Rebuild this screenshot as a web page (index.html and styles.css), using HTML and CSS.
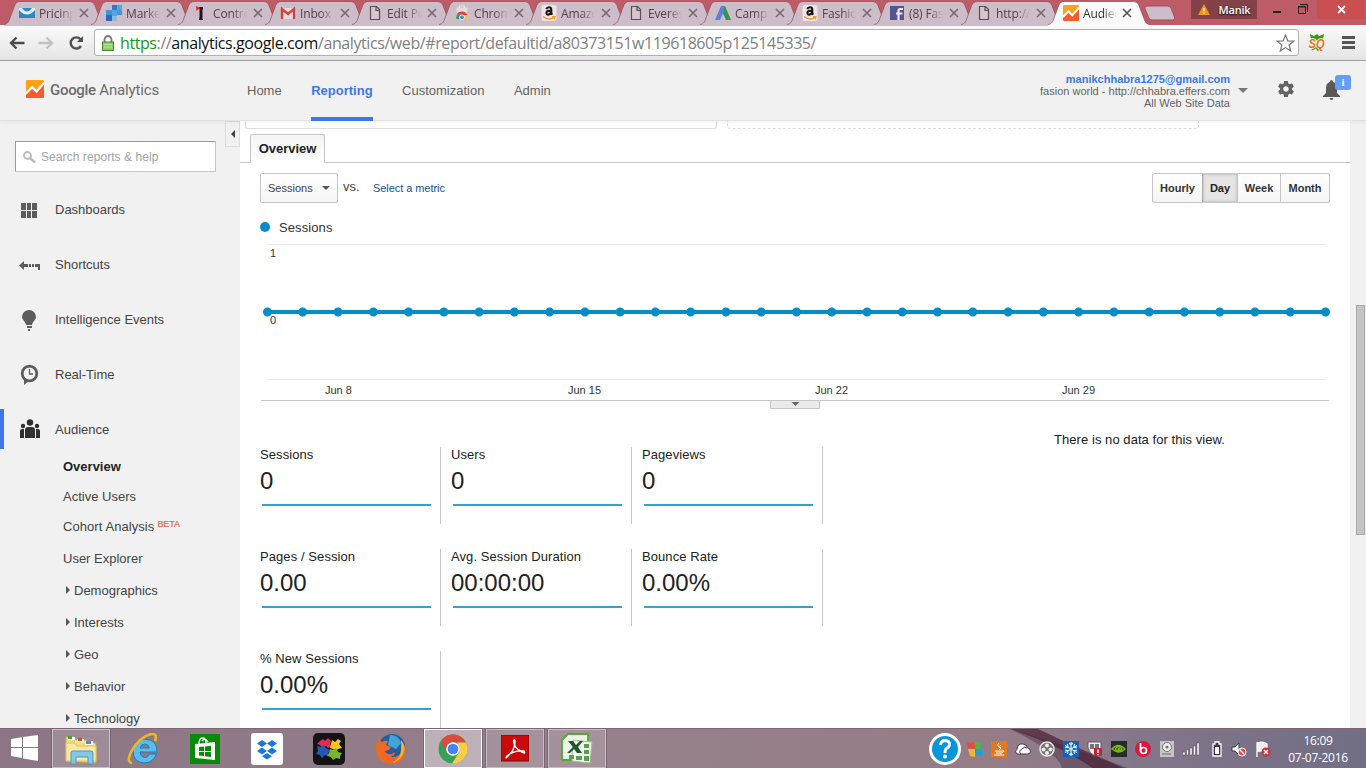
FILE: index.html
```html
<!DOCTYPE html>
<html lang="en">
<head>
<meta charset="utf-8">
<title>Audience Overview - Google Analytics</title>
<link rel="stylesheet" href="styles.css">
</head>
<body>
<svg class="defs" width="0" height="0">
  <defs>
    <symbol id="tab" viewBox="0 0 101 26">
      <path d="M0 24.5C4 24 5 21 6 18L10.500 6Q12 1.500 16 1.500H86Q89.500 1.500 91 5.500L96.500 20Q98 24 101 24.500V26H0Z" fill="currentColor"/>
      <path d="M0 24.5C4 24 5 21 6 18L10.500 6Q12 1.500 16 1.500H86Q89.500 1.500 91 5.500L96.500 20Q98 24 101 24.500" fill="none" stroke="#8e4a59" stroke-opacity=".7"/>
    </symbol>
    <symbol id="x" viewBox="0 0 10 10"><path d="M1 1l8 8M9 1l-8 8" stroke="currentColor" stroke-width="1.600"/></symbol>
    <symbol id="page" viewBox="0 0 16 16"><path d="M3.500 1.500h6l3 3v10h-9zM9 1.500v4h4" fill="#d6c6d0" stroke="#5c4c54" stroke-width="1.200"/></symbol>
    <symbol id="amazon" viewBox="0 0 16 16"><rect x=".5" width="15" height="16" rx="2" fill="#f1e4e6"/><path d="M5.300 4.200Q6 2.200 8.200 2.300Q10.300 2.400 10.300 4.500V8.500L11.300 9.700M10 5.600C6.500 5.600 5.200 6.500 5.400 8.200C5.700 10.200 8.700 10.200 10 7.500" fill="none" stroke="#1b1515" stroke-width="2.100"/><path d="M2 11.500Q7.500 16 13 12.500M11 11.700l3-.1-.8 2.700" fill="none" stroke="#f09a28" stroke-width="1.300"/></symbol>
    <symbol id="ga" viewBox="0 0 18 18"><rect width="18" height="18" rx="1" fill="#ffa21a"/><path d="M0 15L6 8.500l4.500 4L18 4v13q0 1-1 1H1q-1 0-1-1z" fill="#fb5a2c"/><path d="M0 13.500L6 7.200l4.500 4.300L18 3" fill="none" stroke="#fff" stroke-width="2.200"/></symbol>
    <symbol id="tri" viewBox="0 0 4 8"><path d="M0 0l4 4-4 4z" fill="#555"/></symbol>
  </defs>
</svg>

<header class="chrome">
  <div class="tabs">
    <div class="tab"><svg class="shape"><use href="#tab"/></svg><svg class="fav" viewBox="0 0 16 16"><path d="M0 3h16v10H0z" fill="#2b88c4"/><path d="M0 3l3 0q5 7 10 0l3 0v2q-8 9-16 0z" fill="#e5edf5"/></svg><span class="title">Pricing</span><svg class="close"><use href="#x"/></svg></div>
    <div class="tab"><svg class="shape"><use href="#tab"/></svg><svg class="fav" viewBox="0 0 16 16"><path d="M6 0h5v5H6z" fill="#3678c8"/><path d="M11 0h5v5h-5zM6 5h5v6H6z" fill="#58a6dd"/><path d="M11 5h5v5h-5zM0 5h6v5H0z" fill="#4594d5"/><path d="M0 10h6v6H0z" fill="#2f69bd"/><path d="M6 11h5v5H6z" fill="#86bde1"/></svg><span class="title">Market</span><svg class="close"><use href="#x"/></svg></div>
    <div class="tab"><svg class="shape"><use href="#tab"/></svg><svg class="fav" viewBox="0 0 16 16"><path d="M6 2h4v2l-.5 1V14h.5v1H6v-1l.5-2V5z" fill="#2b1518"/><path d="M3 1l4 2-3.500 3z" fill="#dd2629"/></svg><span class="title">Control</span><svg class="close"><use href="#x"/></svg></div>
    <div class="tab"><svg class="shape"><use href="#tab"/></svg><svg class="fav" viewBox="0 0 16 16"><path d="M1 3h14v11H1z" fill="#ead8dc"/><path d="M2 14V4l6 5 6-5v10" fill="none" stroke="#d5423b" stroke-width="2.300"/></svg><span class="title">Inbox (</span><svg class="close"><use href="#x"/></svg></div>
    <div class="tab"><svg class="shape"><use href="#tab"/></svg><svg class="fav"><use href="#page"/></svg><span class="title">Edit Post</span><svg class="close"><use href="#x"/></svg></div>
    <div class="tab"><svg class="shape"><use href="#tab"/></svg><svg class="fav" viewBox="0 0 16 16"><path d="M2.500 2.500h11v5h-11z" fill="#e4dce0"/><path d="M5.500 3V.800h5V3" fill="none" stroke="#e9e2e6"/><path d="M2 13a6 6 0 0 1 3-5l3 6H2.500z" fill="#35a057"/><path d="M3 9a6.200 6.200 0 0 1 10.500 1L8 10z" fill="#de4438"/><path d="M9 10h4.500q1 2 .5 4H8z" fill="#f4c63c"/><circle cx="8" cy="12.300" r="2.400" fill="#4c83dc" stroke="#eee"/></svg><span class="title">Chrome</span><svg class="close"><use href="#x"/></svg></div>
    <div class="tab"><svg class="shape"><use href="#tab"/></svg><svg class="fav"><use href="#amazon"/></svg><span class="title">Amazon</span><svg class="close"><use href="#x"/></svg></div>
    <div class="tab"><svg class="shape"><use href="#tab"/></svg><svg class="fav"><use href="#page"/></svg><span class="title">Everest</span><svg class="close"><use href="#x"/></svg></div>
    <div class="tab"><svg class="shape"><use href="#tab"/></svg><svg class="fav" viewBox="0 0 16 16"><path d="M6 1h4l6 14h-5L7 6z" fill="#2f9558"/><path d="M6 1h3v5L5 15H0z" fill="#6080d5"/></svg><span class="title">Campa</span><svg class="close"><use href="#x"/></svg></div>
    <div class="tab"><svg class="shape"><use href="#tab"/></svg><svg class="fav"><use href="#amazon"/></svg><span class="title">Fashion</span><svg class="close"><use href="#x"/></svg></div>
    <div class="tab"><svg class="shape"><use href="#tab"/></svg><svg class="fav" viewBox="0 0 16 16"><rect x="1" y="1" width="14" height="14" fill="#555493"/><path d="M9.500 15V6q0-2 2-2H14M7 8.500h6.500" fill="none" stroke="#f1e8ef" stroke-width="2.200"/></svg><span class="title">(8) Fash</span><svg class="close"><use href="#x"/></svg></div>
    <div class="tab"><svg class="shape"><use href="#tab"/></svg><svg class="fav"><use href="#page"/></svg><span class="title">http://c</span><svg class="close"><use href="#x"/></svg></div>
    <div class="tab active"><svg class="shape"><use href="#tab"/></svg><svg class="fav"><use href="#ga"/></svg><span class="title">Audien</span><svg class="close"><use href="#x"/></svg></div>
    <svg class="newtab" viewBox="0 0 32 16"><path d="M1 4Q0 1 3 1H24Q26 1 27 3L30.500 12Q31.500 15 28.500 15H8Q6 15 5 13Z" fill="#cdbdc8" stroke="#9c5061"/></svg>
    <div class="user"><svg width="12" height="11" viewBox="0 0 12 11"><path d="M6 0l6 11H0z" fill="#f29418"/><path d="M6 4v3.500M6 8.500V10" stroke="#fff" stroke-width="1.200"/></svg><span>Manik</span></div>
    <svg class="winmin" width="8" height="2"><path d="M0 0h8v2H0z" fill="#222"/></svg>
    <svg class="winmax" width="10" height="10" viewBox="0 0 10 10"><path d="M.5 2.500h7v7h-7zM0 3h8M2 .5h7.500V8" fill="none" stroke="#222" stroke-width="1"/></svg>
    <div class="winclose"><svg width="9" height="9"><path d="M1 1l7 7M8 1l-7 7" stroke="#fff" stroke-width="1.800"/></svg></div>
  </div>
  <div class="toolbar">
    <svg class="back" width="16" height="14" viewBox="0 0 16 14"><path d="M7.500 1.500L2 7l5.500 5.500M2 7h13.500" fill="none" stroke="#4c4c4c" stroke-width="2.400"/></svg>
    <svg class="fwd" width="16" height="14" viewBox="0 0 16 14"><path d="M8.500 1.500L14 7l-5.500 5.500M14 7H.5" fill="none" stroke="#c2c2c2" stroke-width="2.400"/></svg>
    <svg class="reload" width="17" height="16" viewBox="0 0 17 16"><path d="M12.500 4.200A5.600 5.600 0 1 0 13 11" fill="none" stroke="#505050" stroke-width="2.400"/><path d="M15 1v6H9z" fill="#505050"/></svg>
    <div class="omnibox">
      <svg class="lock" width="12" height="16" viewBox="0 0 12 16"><path d="M2.500 8V4.500a3.500 3.500 0 0 1 7 0V8" fill="none" stroke="#777" stroke-width="1.800"/><rect x=".5" y="7" width="11" height="8.500" fill="#8dd16a" stroke="#44852f"/><path d="M2 9.500h8M2 12h8" stroke="#b5e898"/></svg>
      <span class="url"><span class="scheme">https</span>://<span class="host">analytics.google.com</span>/analytics/web/#report/defaultid/a80373151w119618605p125145335/</span>
      <svg class="star" width="19" height="18" viewBox="0 0 19 18"><path d="M9.500 1l2.300 5.800 6 .3-4.700 3.900 1.600 6-5.200-3.400L4.300 17l1.600-6L1.200 7.100l6-.3z" fill="#fff" stroke="#777" stroke-width="1.200"/></svg>
    </div>
    <svg class="sq" width="18" height="20" viewBox="0 0 18 20"><path d="M2 1l4 2 3-2 2 2 5-2-1 6H3zM3 13h11l1 2-3-.5-2 4-2-3-4 2z" fill="#3c9a18"/><text x=".5" y="14.500" textLength="16" lengthAdjust="spacingAndGlyphs">SQ</text></svg>
    <svg class="menu" width="13" height="13"><path d="M0 1.500h13M0 6.500h13M0 11.500h13" stroke="#555" stroke-width="3"/></svg>
  </div>
</header>

<header class="gahead">
  <svg class="galogo" width="18" height="18"><use href="#ga"/></svg>
  <span class="brand"><b>Google</b> Analytics</span>
  <nav class="topnav"><a>Home</a><a class="on">Reporting</a><a>Customization</a><a>Admin</a></nav>
  <div class="account"><b>manikchhabra1275@gmail.com</b><span>fasion world - http://chhabra.effers.com</span><span>All Web Site Data</span></div>
  <svg class="acaret" width="10" height="5"><path d="M0 0h10L5 5z" fill="#777"/></svg>
  <svg class="gear" width="16" height="16" viewBox="2 2 20 20"><path d="M19.430 12.980c.04-.32.07-.64.07-.98s-.03-.66-.07-.98l2.110-1.650c.19-.15.24-.42.12-.64l-2-3.460c-.12-.22-.39-.3-.61-.22l-2.490 1c-.52-.4-1.080-.73-1.690-.98l-.38-2.650C14.460 2.180 14.250 2 14 2h-4c-.25 0-.46.18-.49.42l-.38 2.650c-.61.25-1.170.59-1.690.98l-2.490-1c-.23-.09-.49 0-.61.22l-2 3.460c-.13.22-.07.49.12.64l2.110 1.650c-.04.32-.07.65-.07.98s.03.66.07.98l-2.110 1.650c-.19.15-.24.42-.12.64l2 3.460c.12.22.39.3.61.22l2.490-1c.52.4 1.080.73 1.690.98l.38 2.650c.03.24.24.42.49.42h4c.25 0 .46-.18.49-.42l.38-2.650c.61-.25 1.170-.59 1.690-.98l2.490 1c.23.09.49 0 .61-.22l2-3.460c.12-.22.07-.49-.12-.64l-2.110-1.650zM12 15.500c-1.930 0-3.500-1.570-3.500-3.500s1.570-3.500 3.500-3.500 3.500 1.570 3.500 3.500-1.570 3.500-3.500 3.500z" fill="#636363"/></svg>
  <div class="bell"><svg width="17" height="20" viewBox="0 0 17 20"><path d="M8.500 0Q10 0 10 2Q14 3 14 8v5l3 3v1H0v-1l3-3V8Q3 3 7 2Q7 0 8.500 0zM6.500 18h4q-.5 2-2 2t-2-2z" fill="#5a5a5a"/></svg><span class="info">i</span></div>
</header>

<div class="body">
  <aside class="side">
    <div class="search"><svg width="13" height="12" viewBox="0 0 13 12"><circle cx="4.500" cy="4.500" r="3.500" fill="none" stroke="#bbb" stroke-width="1.800"/><path d="M7 7l5 4.500" stroke="#bbb" stroke-width="2.500"/></svg><span>Search reports &amp; help</span></div>
    <ul class="menu1">
      <li><svg viewBox="0 0 24 24"><path d="M5 5h5v7H5zM11 5h4v7h-4zM16 5h5v7h-5zM5 13h5v7H5zM11 13h4v7h-4zM16 13h5v7h-5z"/></svg>Dashboards</li>
      <li><svg viewBox="0 0 24 24"><path d="M3 12.500l5-4.500v3h4v3H8v3zM13 11h2v3h-2zM16 11h2v3h-2zM19 11h5v6h-2v-3h-3z"/></svg>Shortcuts</li>
      <li><svg viewBox="0 0 24 24"><path d="M13 2a7 7 0 0 1 7 7c0 3-4 5-4 8h-6c0-3-4-5-4-8a7 7 0 0 1 7-7zM11 18h5v2h-5zM12 21h2v2h-2z"/></svg>Intelligence Events</li>
      <li><svg viewBox="0 0 24 24"><circle cx="13.500" cy="10.500" r="7.300" fill="none" stroke="#5c5c5c" stroke-width="2.800"/><path d="M8 15v7l5-4z"/><path d="M13.500 6v5H17" fill="none" stroke="#5c5c5c" stroke-width="1.300"/></svg>Real-Time</li>
      <li class="cur"><svg viewBox="0 0 24 24"><circle cx="14" cy="5.500" r="3.200"/><circle cx="7" cy="9" r="2.200"/><circle cx="21" cy="9" r="2.200"/><path d="M9 21v-8q0-3 3-3h4q3 0 3 3v8zM4 21v-7q0-2 2-2h2v9zM20 21v-9h2q2 0 2 2v7z"/></svg>Audience</li>
    </ul>
    <ul class="menu2">
      <li><b>Overview</b></li><li>Active Users</li><li class="beta">Cohort Analysis<i>BETA</i></li><li>User Explorer</li>
      <li><svg><use href="#tri"/></svg>Demographics</li><li><svg><use href="#tri"/></svg>Interests</li><li><svg><use href="#tri"/></svg>Geo</li><li><svg><use href="#tri"/></svg>Behavior</li><li><svg><use href="#tri"/></svg>Technology</li>
    </ul>
    <div class="collapse"><svg width="4" height="8"><path d="M4 0v8L0 4z" fill="#444"/></svg></div>
  </aside>

  <main>
    <div class="segments"><div class="seg"></div><div class="seg dashed"></div></div>
    <div class="tabrow"><div class="otab">Overview</div></div>
    <div class="controls">
      <div class="select">Sessions<svg width="8" height="4"><path d="M0 0h8L4 4z" fill="#555"/></svg></div>
      <span class="vs">vs.</span><a class="metriclink">Select a metric</a>
      <div class="range"><span>Hourly</span><span class="sel">Day</span><span>Week</span><span>Month</span></div>
    </div>
    <div class="legend"><i></i>Sessions</div>
    <svg class="chart" width="1110" height="172" viewBox="240 240 1110 172">
      <path d="M267 244.500h1059M267 379.500h1059" stroke="#ebebeb"/>
      <path d="M267.500 312H1325.500" stroke="#058dc7" stroke-width="4"/>
      <path d="M267.500 312H1325.500" pathLength="30" stroke="#058dc7" stroke-width="9" stroke-linecap="round" stroke-dasharray="0 1"/>
      <text x="270" y="257">1</text><text x="270" y="324">0</text>
      <text x="325" y="394">Jun 8</text><text x="568" y="394">Jun 15</text><text x="815" y="394">Jun 22</text><text x="1062" y="394">Jun 29</text>
      <path d="M261 400.500h1068" stroke="#c6c6c6"/>
      <path d="M770.500 401v7.500h49V401" fill="#ebebeb" stroke="#c6c6c6"/><path d="M791.500 402h8l-4 4z" fill="#666"/>
    </svg>
    <div class="lower">
      <div class="metrics">
        <div class="m"><span>Sessions</span><strong>0</strong></div><div class="m"><span>Users</span><strong>0</strong></div><div class="m"><span>Pageviews</span><strong>0</strong></div>
        <div class="m"><span>Pages / Session</span><strong>0.00</strong></div><div class="m"><span>Avg. Session Duration</span><strong>00:00:00</strong></div><div class="m"><span>Bounce Rate</span><strong>0.00%</strong></div>
        <div class="m"><span>% New Sessions</span><strong>0.00%</strong></div>
      </div>
      <p class="nodata">There is no data for this view.</p>
    </div>
  </main>
  <div class="scroll"><div class="thumb"></div></div>
</div>

<footer class="taskbar">
  <svg class="streak" width="1366" height="40"><path d="M1010 0Q1080 20 1130 40H1062Q1060 24 1010 0z" fill="#3f293c" opacity=".4"/><path d="M1010 0h28q42 20 88 40h-32Q1060 16 1010 0z" fill="#4a2133" opacity=".7"/></svg>
  <div class="apps">
    <div class="app start"><svg width="28" height="26" viewBox="0 0 28 26"><path d="M0 4l11-1.700V12H0zM12 2l15-2v12H12zM0 13h11v10L0 21zM12 13h15v13l-15-2.500z" fill="#fff"/></svg></div>
    <div class="app open"><svg width="34" height="32" viewBox="0 0 34 32"><path d="M2 28V4h8l2 3h10l2 3h8v20z" fill="#f0dc86" stroke="#cda84e"/><path d="M4 4h7v3H4zM13 6h7v3h-7zM21 8h8v4h-8z" fill="#fff"/><path d="M4 3h4v3H4z" fill="#3fa335"/><path d="M14 5h4v3h-4z" fill="#d3482f"/><path d="M22 8h5v3h-5z" fill="#438fd2"/><path d="M2 10h8l3 3h19v15H2z" fill="#f7e8a3" stroke="#e1c365"/><path d="M7 31V20q0-2 2-2h18q2 0 2 2v11h-5v-7H12v7z" fill="#86c6e6" stroke="#4b97c0"/></svg></div>
    <div class="app"><svg width="32" height="32" viewBox="0 0 32 32"><path d="M29.500 21Q26 30 17 30Q6 29 6 18Q7 6 18 6Q30.500 7 30 19H13Q14 24.500 18 24.500Q21 24.500 22.500 21zM13 15h9.500q-1-4-4.700-4T13 15z" fill="#59bdec" stroke="#217bb5"/><path d="M5 30Q-1 29 4 19Q12 4 24 1Q31 0 28 8" fill="none" stroke="#edb622" stroke-width="2.600"/></svg></div>
    <div class="app"><svg width="30" height="30" viewBox="0 0 30 30"><path d="M0 0h30v30H0z" fill="#058b05"/><path d="M5 10l20-2v18l-20-2z" fill="#fff"/><path d="M9 10Q9 4 12.500 4T16 9M12 7Q15 3 18 8" fill="none" stroke="#fff" stroke-width="1.300"/><path d="M9 13l5-.5V17H9zM15 12.400l6-.6V17h-6zM9 18h5v4l-5-.5zM15 18h6v5l-6-.7z" fill="#058b05"/></svg></div>
    <div class="app"><svg width="32" height="32" viewBox="0 0 32 32"><rect width="32" height="32" rx="3" fill="#fff"/><path d="M11 7l5 3.500-5 3.500-5-3.500zM21 7l5 3.500-5 3.500-5-3.500zM11 14.500l5 3.500-5 3.500L6 18zM21 14.500l5 3.500-5 3.500-5-3.500zM16 20l5 3.200-5 3.200-5-3.200z" fill="#1578e5"/></svg></div>
    <div class="app"><svg width="32" height="32" viewBox="0 0 32 32"><rect width="32" height="32" rx="5" fill="#141416"/><path d="M7 8l3-2 2 2 3-3 3 3-1 3 2 3-4 1-2-2-4 2-2-3-3-1z" fill="#e12d50"/><path d="M19 7l3 2 3-3 3 2-2 3 3 4-4 1-2 2-3-2-3-1 1-4z" fill="#f1c720"/><path d="M4 13l4 1 3-2 2 3 4 2-2 3 1 3-4-1-3 3-2-3-4-1 2-3z" fill="#2558b7"/><path d="M17 16l3 1 3-2 2 4 4 1-2 3 0 3-4-1-3 2-2-3-4-1 2-3z" fill="#78b72b"/></svg></div>
    <div class="app"><svg width="32" height="32" viewBox="0 0 32 32"><circle cx="17" cy="14" r="13" fill="#245d9f"/><path d="M15 2q9 0 11 8l-5 6-8-4z" fill="#42a5d5"/><path d="M4 5q1 3 3 4 3-2 6-1l-2 4 5 2-2 3-4 1q2 4 7 3l3-2q0 4-5 5 9 1 12-6 1-5-1-10 5 5 4 11-2 12-14 12Q2 30 1 17 1 10 4 5z" fill="#ee6a22"/><path d="M26 7q5 6 3 12-3 9-12 11 9-5 9-13z" fill="#f6ae2c"/></svg></div>
    <div class="app open front"><svg width="30" height="30" viewBox="0 0 30 30"><circle cx="15" cy="15" r="14.500" fill="#36a055"/><path d="M2.500 7.700A14.500 14.500 0 0 1 28 8.500H15a6.500 6.500 0 0 0-6 9z" fill="#dd4b3e"/><path d="M28 8.500A14.500 14.500 0 0 1 14 29.500l7-11q2-5-2-10z" fill="#fccc45"/><circle cx="15" cy="15" r="6.800" fill="#fff"/><circle cx="15" cy="15" r="5.300" fill="#4584ee"/></svg></div>
    <div class="app open"><svg width="28" height="28" viewBox="0 0 28 28"><path d="M0 0h28v26H0z" fill="#c90a0a" stroke="#7c0909"/><path d="M6 22Q14 15 14 7Q14 3 12.500 6Q13 13 21 17Q25 19 23 16Q13 15 6 21Q4 24 6 22z" fill="none" stroke="#fff" stroke-width="1.400"/></svg></div>
    <div class="app open"><svg width="32" height="32" viewBox="0 0 32 32"><path d="M1 27V7l6-6h20v26z" fill="#eef4e9" stroke="#4bae2d" stroke-width="1.800"/><path d="M12 7l19 2-2 21-18-2z" fill="#f1f4ed" stroke="#aab7a5"/><path d="M23 11h5v4h-5zM23 17h5v4h-5zM8 22h5v4H8zM15 23h6v4h-6zM23 23h5v5h-5z" fill="#5c9f4d"/><path d="M7 8h5l3 4 4-4h3l-5 6 4 6h-5l-3-4-4 4H6l6-6z" fill="#1d5930"/></svg></div>
  </div>
  <div class="tray">
    <svg class="help" width="32" height="32" viewBox="0 0 32 32"><circle cx="16" cy="16" r="14.500" fill="#0895dc" stroke="#fff" stroke-width="3"/><path d="M11.500 12Q12 7.500 16 7.500Q21 8 20.500 12Q20 14 17.500 15.500Q16 16.500 16 20" fill="none" stroke="#fff" stroke-width="3"/><circle cx="16" cy="23.500" r="2" fill="#fff"/></svg>
    <svg viewBox="0 0 16 16"><path d="M0 2l7-1 1 7-7-1z" fill="#e94c31"/><path d="M8 1l7 1-2 6-5 0z" fill="#51b24c"/><path d="M1 8l7 0v8l-5-1z" fill="#f1b62c"/><path d="M8 8l8 1v5l-7 1z" fill="#299bd5"/></svg>
    <svg viewBox="0 0 16 16"><path d="M0 0h16v16H0z" fill="#e37820"/><path d="M8 2Q5 4 8 6t0 3M10 4Q7 6 10 7M4 10h7M5 12h6M3 14h10M11 10q4-1 0 2" fill="none" stroke="#fff"/></svg>
    <svg viewBox="0 0 16 16"><path d="M2 13Q-1 11 2 8Q3 2 8 3Q12 3 12.500 7Q16 8 15.500 11Q15 13 13 13z" fill="#fff" stroke="#45394a"/><path d="M6 13Q3 10 7 8Q9 5 12 7" fill="none" stroke="#45394a"/></svg>
    <svg viewBox="0 0 16 16"><circle cx="8" cy="8" r="7" fill="#77716f" stroke="#e8e8e8" stroke-width="1.500"/><circle cx="8" cy="4.500" r="2" fill="#eee"/><circle cx="4.500" cy="8.500" r="2" fill="#eee"/><circle cx="11.500" cy="8.500" r="2" fill="#eee"/><circle cx="8" cy="12" r="2" fill="#eee"/></svg>
    <svg viewBox="0 0 16 16"><path d="M0 0h16v16H0z" fill="#1261c2"/><path d="M8 1v14M2 4.500l12 7M14 4.500l-12 7M6 2l2 2 2-2M6 14l2-2 2 2M2 7l3-1-.5-3M14 7l-3-1 .5-3M2 9l3 1-.5 3M14 9l-3 1 .5 3" fill="none" stroke="#d7efff" stroke-width="1.200"/></svg>
    <svg viewBox="0 0 16 16"><path d="M1 1h13v7q-1 4-6 7-6-3-7-8z" fill="#eee" stroke="#6b5b68"/><path d="M3 3h4v5H3zM8 3h4v4H8z" fill="#77727c"/><path d="M7 7h8v8H7z" fill="#c5213d"/><path d="M11 8.500V12M11 13v1.200" stroke="#fff" stroke-width="1.400"/></svg>
    <svg viewBox="0 0 16 16"><path d="M0 0h16v16H0z" fill="#272c2a"/><path d="M1 8Q7 1 14 8Q8 14 1 8zM4 8Q8 3 11 8Q8 12 4 8" fill="none" stroke="#7bb713" stroke-width="1.400"/><circle cx="8" cy="8" r="1.500" fill="#7bb713"/></svg>
    <svg viewBox="0 0 16 16"><circle cx="8" cy="8" r="8" fill="#dc163c"/><path d="M5.500 2v8" stroke="#fff" stroke-width="1.700"/><circle cx="8.500" cy="9.500" r="3" fill="none" stroke="#fff" stroke-width="1.700"/></svg>
    <svg viewBox="0 0 16 16"><path d="M1 0h14v16H1z" fill="#c5c5c8"/><circle cx="8" cy="6" r="4.500" fill="#eee" stroke="#777"/><circle cx="8" cy="6" r="1.500" fill="#777"/><path d="M3 13h9" stroke="#999" stroke-width="2"/></svg>
    <svg class="signal" viewBox="0 0 16 16"><path d="M0 11h2v3H0zM3.500 9h2v5h-2zM7 7h2v7H7zM10.500 5h2v9h-2zM14 2h2v12h-2z" fill="#fff" stroke="#40313d" stroke-width=".4"/></svg>
    <svg class="battery" viewBox="0 0 16 16"><path d="M6 1h4v2h2v12H4V3h2z" fill="#403440" stroke="#fff" stroke-width="1.300"/><path d="M6 6h4v7H6z" fill="#fff"/></svg>
    <svg viewBox="0 0 16 16"><path d="M1 6h3l4-4v12L4 10H1z" fill="#fff" stroke="#433641"/><circle cx="11" cy="11" r="4" fill="#e94a42" stroke="#fff"/><path d="M8.500 8.500l5 5" stroke="#fff" stroke-width="1.300"/></svg>
    <svg viewBox="0 0 16 16"><path d="M2 1v15M3 2q5-2 9 1v7H3z" fill="#eee" stroke="#fff" stroke-width="1.300"/><circle cx="11" cy="11" r="4.500" fill="#d32c31"/><path d="M9 9l4 4M13 9l-4 4" stroke="#fff" stroke-width="1.500"/></svg>
    <div class="clock"><span>16:09</span><span>07-07-2016</span></div>
  </div>
</footer>
</body>
</html>
```
FILE: styles.css
```css
* { box-sizing: border-box; }
body { margin: 0; width: 1366px; height: 768px; overflow: hidden; display: flex; flex-direction: column; background: #fff; font: 13px "Liberation Sans", Arial, sans-serif; color: #222; }
svg { display: block; flex: none; }
.defs { position: absolute; }
ul, p { margin: 0; padding: 0; list-style: none; }
b { font-weight: bold; }

/* Browser window */
.chrome { height: 61px; flex: none; background: #bd5b67; border-bottom: 1px solid #a3a3a3; }
.tabs { display: flex; height: 25px; padding-left: 4px; font: 12px "Open Sans", "Noto Sans", sans-serif; }
.tab { position: relative; z-index: 1; isolation: isolate; width: 101px; height: 26px; flex: none; margin-right: -14px; display: flex; align-items: center; padding-left: 15px; color: #cdbdc8; }
.tab.active { color: #fbfafb; z-index: 2; }
.shape { position: absolute; left: 0; top: 0; width: 101px; height: 26px; z-index: -1; }
.fav { width: 16px; height: 16px; }
.title { width: 34px; margin-left: 4px; overflow: hidden; white-space: nowrap; color: #524249; letter-spacing: -.15px; -webkit-mask-image: linear-gradient(90deg, #000 60%, transparent); mask-image: linear-gradient(90deg, #000 60%, transparent); }
.close { width: 10px; height: 10px; margin-left: 6px; color: #78686f; }
.active .title { color: #333; }
.active .close { margin-left: 5px; color: #555; }
.newtab { width: 32px; height: 16px; margin: 5px 0 0 9px; }
.user { width: 66px; height: 19px; margin-left: 15px; background: #834149; color: #fff; display: flex; align-items: center; justify-content: center; gap: 9px; flex: none; font-weight: 600; font-size: 11px; letter-spacing: -.2px; text-shadow: 0 1px 2px #000; }
.winmin { margin: 11px 0 0 16px; }
.winmax { margin: 4px 0 0 17px; }
.winclose { width: 48px; height: 19px; margin-left: 9px; background: #c94e50; display: flex; align-items: center; justify-content: center; flex: none; }
.toolbar { height: 35px; background: linear-gradient(#fbfafb, #e5e5e5); display: flex; align-items: center; padding-left: 10px; }
.back { margin-left: -1px; }
.fwd { margin-left: 13px; }
.reload { margin-left: 14px; }
.omnibox { margin-left: 9px; width: 1205px; height: 27px; background: #fff; border: 1px solid #b0b0b0; border-radius: 3px; display: flex; align-items: center; padding-left: 7px; flex: none; }
.url { margin-left: 6px; width: 1156px; white-space: nowrap; font: 16px/24px "Open Sans", "Noto Sans", sans-serif; letter-spacing: -.41px; color: #808080; }
.scheme { color: #179517; }
.host { color: #111; }
.sq { margin-left: 9px; }
.sq text { font: italic bold 13px "Liberation Sans", sans-serif; fill: #f56b0d; stroke: #fff; stroke-width: 1.500px; paint-order: stroke; }
.menu { margin-left: 16px; }

/* Product header */
.gahead { height: 60px; flex: none; background: #f1f1f1; border-bottom: 1px solid #e2e2e2; display: flex; align-items: center; padding-left: 26px; color: #636363; position: relative; z-index: 3; box-shadow: 0 1px 5px rgba(0,0,0,.06); }
.galogo { margin-top: -3px; }
.brand { margin: -2px 0 0 6px; width: 197px; font: 15px Roboto, sans-serif; letter-spacing: -.16px; color: #6c6c6c; }
.brand b { font-weight: 500; letter-spacing: -.3px; }
.topnav { display: flex; gap: 29.500px; height: 60px; flex: none; width: 740px; }
.topnav a { height: 60px; line-height: 59px; }
.topnav .on { color: #3c78e7; font-weight: bold; border-bottom: 4px solid #3c78e7; }
.account { width: 243px; display: flex; flex-direction: column; align-items: flex-end; font-size: 11px; line-height: 12px; margin-top: 1px; }
.account b { color: #3c78e7; }
.acaret { margin-left: 8px; }
.gear { margin: -3px 0 0 30px; }
.bell { position: relative; margin: -2px 0 0 29px; }
.info { position: absolute; left: 12px; top: -5px; width: 16px; height: 15px; border-radius: 3px; background: #669df6; color: #fff; font: bold 11px/15px "Liberation Serif", serif; text-align: center; }

.body { flex: 1; min-height: 0; display: flex; }
.side { position: relative; width: 240px; background: #f1f1f1; color: #444; overflow: hidden; padding-top: 20px; flex: none; }
.search { width: 201px; height: 31px; margin-left: 15px; border: 1px solid #c6c6c6; border-top: 1px solid #999; border-left-color: #999; background: #fff; display: flex; align-items: center; gap: 5px; padding-left: 7px; color: #a3a3a3; font-size: 12px; letter-spacing: .07px; }
.menu1 { padding-top: 10px; }
.menu1 li { height: 55px; display: flex; align-items: center; padding-left: 16px; gap: 15px; }
.menu1 svg { width: 24px; height: 24px; fill: #5c5c5c; }
.menu1 .cur { height: 40px; margin: 7px 0 1px; border-left: 4px solid #3c78e7; padding-left: 12px; }
.menu1 .cur svg { fill: #303030; }
.menu2 { padding-left: 63px; padding-top: 1px; }
.menu2 li { height: 32px; display: flex; align-items: center; }
.menu2 li:nth-child(-n+3) { height: 30px; }
.menu2 .beta { letter-spacing: .07px; }
.menu2 .beta + li { margin-top: 1px; }
.menu2 b { color: #222; }
.menu2 i { font: 9px "Liberation Sans", sans-serif; color: #dd6b38; margin: -4px 0 0 3px; letter-spacing: -.1px; -webkit-text-stroke: .2px #dd6b38; }
.menu2 svg { width: 4px; height: 8px; margin: 0 4px 0 3px; }
.collapse { position: absolute; right: 0; top: 0; width: 15px; height: 26px; border: 1px solid #dcdcdc; display: flex; align-items: center; justify-content: center; }

main { width: 1110px; flex: none; overflow: hidden; }
.segments { display: flex; height: 8px; padding-left: 5px; gap: 10px; }
.seg { width: 472px; border: 1px solid #ddd; border-top: 0; border-radius: 0 0 3px 3px; }
.dashed { border-style: dashed; border-top: 0; }
.tabrow { height: 34px; padding: 5px 0 0 10px; border-bottom: 1px solid #c6c6c6; }
.otab { width: 75px; height: 29px; border: 1px solid #c6c6c6; border-bottom: 0; border-radius: 2px 2px 0 0; background: linear-gradient(#f5f5f5, #fff); font-weight: bold; letter-spacing: -.05px; text-align: center; line-height: 27px; }
.controls { height: 51px; padding: 10px 20px 0; display: flex; align-items: flex-start; font-size: 11px; }
.select { width: 78px; height: 30px; border: 1px solid #c6c6c6; border-radius: 2px; background: linear-gradient(#fff, #f5f5f5); display: flex; align-items: center; justify-content: space-between; padding: 0 7px; color: #444; }
.vs { font-size: 13px; margin: 6px 0 0 5px; width: 30px; color: #444; }
.metriclink { color: #15539b; margin-top: 9px; letter-spacing: -.06px; }
.range { margin-left: auto; display: flex; height: 30px; width: 178px; border: 1px solid #c6c6c6; border-radius: 2px; background: linear-gradient(#fff, #f5f5f5); font-weight: bold; line-height: 28px; color: #333; }
.range span { border-left: 1px solid #c6c6c6; text-align: center; width: 43px; }
.range span:first-child { border: 0; width: 49px; }
.range .sel { width: 35px; background: #e5e5e5; box-shadow: inset 0 0 3px #aaa; color: #222; border-color: #aaa; }
.range span:last-child { width: 49px; }
.legend { height: 26px; padding: 0 20px; display: flex; align-items: center; gap: 9px; color: #333; letter-spacing: .1px; }
.legend i { width: 10px; height: 10px; border-radius: 50%; background: #058dc7; }
.chart text { font: 11px "Liberation Sans", sans-serif; fill: #333; }
.lower { display: flex; padding: 35px 20px 0; }
.metrics { display: grid; grid-template-columns: repeat(3, 191px); grid-auto-rows: 77px; row-gap: 25px; }
.m { width: 181px; border-right: 1px solid #c6c6c6; display: flex; flex-direction: column; }
.m span { line-height: 16px; letter-spacing: .08px; }
.m strong { font-weight: normal; font-size: 24px; line-height: 28px; margin-top: 4px; }
.m::after { content: ""; height: 2px; margin: 9px 9px 0 2px; background: #35a1d1; }
.nodata { margin: -15px 0 0 221px; letter-spacing: .06px; }
.scroll { width: 16px; background: #f1f1f1; padding: 184px 1px 0 6px; }
.thumb { height: 230px; background: #c4c4c4; border: 1px solid #aaa; }

/* Desktop taskbar */
.taskbar { position: relative; height: 40px; flex: none; background: linear-gradient(90deg, #8c7685, #95808b 45%, #957d88 73%, #80758b 86%, #716e83); border-top: 1px solid #7f6674; display: flex; justify-content: space-between; }
.streak { position: absolute; left: 0; top: 0; }
.apps { display: flex; gap: 4px; position: relative; }
.app { width: 58px; height: 39px; display: flex; align-items: center; justify-content: center; }
.start { width: 48px; padding-left: 2px; }
.start svg { margin-top: -2px; }
.open { border: 1px solid #c9bec5; background: rgba(255,255,255,.15); outline: 1px solid #7a6572; }
.front { background: #bdb0b8; border: 1px solid #fff; }
.tray { position: relative; display: flex; align-items: center; padding-right: 18px; }
.tray > svg { width: 16px; height: 16px; margin-right: 8px; }
.tray .help { width: 32px; height: 32px; margin-right: 6px; }
.tray .signal { margin-right: 10px; }
.tray .battery { margin-right: 6px; }
.clock { width: 60px; margin-left: 9px; display: flex; flex-direction: column; align-items: center; color: #fff; font: 12px/17px "Open Sans", "Noto Sans", sans-serif; letter-spacing: -.3px; white-space: nowrap; }
```
